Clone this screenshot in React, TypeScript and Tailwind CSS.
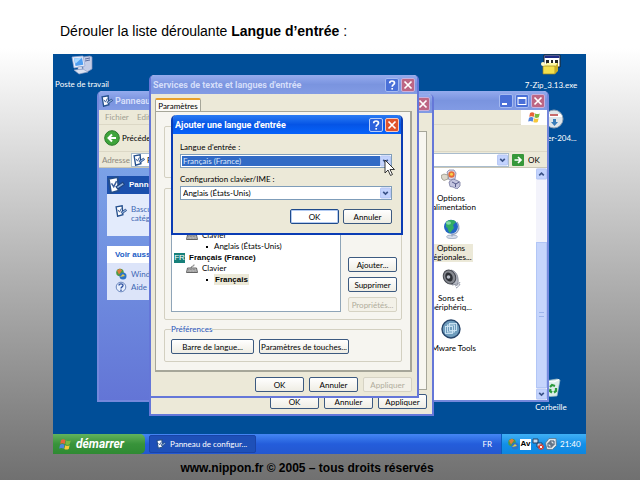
import React from "react";

type Kids = { children?: React.ReactNode };

const TITLE = "font-[Roboto,'Liberation_Sans',sans-serif] font-bold text-[9px] leading-[12px] whitespace-nowrap";
const BOLD = "font-['Liberation_Sans',Arial,sans-serif] text-[8px] font-bold";

function CaptionButton({ kind, active = false }: { kind: "help" | "close" | "min" | "max"; active?: boolean }) {
  const close = kind === "close";
  const tone = close
    ? active
      ? "bg-[#e0532c] border-[#f6c9bd]"
      : "bg-[#bd6684] border-[#c9b0dc]"
    : active
      ? "bg-[#2c62dc] border-[#b7cdf8]"
      : "bg-[#4a70d8] border-[#a5baf0]";
  return (
    <button type="button" aria-label={kind} className={`h-[14px] w-[14px] shrink-0 rounded-xs border ${tone}`}>
      <svg viewBox="0 0 12 12" className="h-full w-full" fill="none" stroke="#fff" strokeWidth="1.7">
        {kind === "close" && <path d="M2.5 2.5l7 7M9.500 2.5l-7 7" />}
        {kind === "help" && (
          <>
            <path d="M3.700 4.200C3.700 1.300 8.500 1.300 8.500 4c0 1.700-2.300 1.700-2.300 3.700" />
            <path d="M6.200 9v1.600" />
          </>
        )}
        {kind === "min" && <path d="M2 9h5" strokeWidth="2" />}
        {kind === "max" && (
          <>
            <rect x="2" y="2.500" width="8" height="7" strokeWidth="1" />
            <path d="M2 3h8" strokeWidth="2" />
          </>
        )}
      </svg>
    </button>
  );
}

function TitleBar({ text, icon, buttons, active = false }: { text: string; icon?: React.ReactNode; buttons: ("help" | "close" | "min" | "max")[]; active?: boolean }) {
  return (
    <header
      className={`flex h-[19px] shrink-0 items-center gap-[2px] rounded-t-[4px] pr-[2px] pl-[2px] ${
        active ? "bg-linear-to-b from-[#2a7bf3] via-[#0554e6] to-[#0763fa] text-white" : "bg-linear-to-b from-[#95abee] via-[#7a94df] to-[#829be4] text-[#d5defa]"
      }`}
    >
      {icon}
      <h2 className={`${TITLE} flex-1 overflow-hidden`}>{text}</h2>
      {buttons.map((b) => (
        <CaptionButton key={b} kind={b} active={active} />
      ))}
    </header>
  );
}

function XpButton({ children, wide = "w-[49px]", disabled = false, primary = false }: Kids & { wide?: string; disabled?: boolean; primary?: boolean }) {
  const tone = disabled
    ? "border-[#d6d3c4] bg-[#f3f1e8] text-[#b0ad9c]"
    : primary
      ? "border-[#1f4a8a] bg-white text-black shadow-[inset_0_0_0_1px_#b3cbf2]"
      : "border-[#3c5a80] bg-linear-to-b from-white to-[#efede4] text-black";
  return (
    <button type="button" disabled={disabled} className={`h-[15px] shrink-0 rounded-xs border text-[8px] leading-[12px] whitespace-nowrap ${wide} ${tone}`}>
      {children}
    </button>
  );
}

function Chevron({ up = false }: { up?: boolean }) {
  return (
    <svg viewBox="0 0 12 12" className="h-3 w-[11px]" fill="none">
      <rect x="0.500" y="0.500" width="11" height="11" rx="1" fill="#c3d3fd" stroke="#b1c4f4" />
      <path d={up ? "M3.500 7.500L6 5l2.500 2.500" : "M3.500 4.700L6 7.200l2.500-2.500"} stroke="#3a5388" strokeWidth="1.800" />
    </svg>
  );
}

function Combo({ id, label, value, selected = false }: { id: string; label: string; value: string; selected?: boolean }) {
  return (
    <div className="flex flex-col gap-[2px]">
      <label htmlFor={id} className="leading-[10px]">{label}</label>
      <div className="flex h-[14px] items-center border border-[#7f9db9] bg-white pl-px">
        <select id={id} className={`h-[10px] min-w-0 flex-1 appearance-none px-px leading-[10px] outline-none ${selected ? "bg-[#316ac5] text-[#dbe7fb]" : "bg-white text-black"}`}>
          <option>{value}</option>
        </select>
        <Chevron />
      </div>
    </div>
  );
}

function PanelIcon({ className = "h-3 w-3" }: { className?: string }) {
  return (
    <svg viewBox="0 0 16 16" className={`shrink-0 ${className}`}>
      <path d="M1.500 2.500l8-1.500 1 12-7 2z" fill="#fff" stroke="#244f8d" strokeWidth="1.800" />
      <path d="M4 6.500l2 3 2.500-5" fill="none" stroke="#3c5f9a" strokeWidth="1.300" />
      <path d="M8 9.500l6-4 1.500 2-6 4z" fill="#8fb0dc" stroke="#1d4380" strokeWidth="1" />
    </svg>
  );
}

function Flag({ className }: { className: string }) {
  return (
    <svg viewBox="0 0 16 16" className={`shrink-0 ${className}`}>
      <path d="M2.500 2.500C4.500 1.200 6 1.500 8 2.700L7 7.500C5.200 6.300 3.500 6.200 1.500 7.200z" fill="#e8643a" />
      <path d="M8.800 3c2 1 3.700 1 5.700 0l-1.200 4.800c-2 1-3.700 1-5.500 0z" fill="#7cba40" />
      <path d="M1.300 8.200c2-1 3.700-.9 5.500.2l-1.100 4.700c-1.800-1-3.500-1.200-5.500-.2z" fill="#5183dc" />
      <path d="M7.600 8.800c1.900 1 3.500 1 5.500.1L12 13.600c-2 1-3.700.9-5.500-.1z" fill="#f6c83b" />
    </svg>
  );
}

function Keyboard() {
  return (
    <svg viewBox="0 0 12 10" className="h-[10px] w-3 shrink-0">
      <path d="M5 4C5 1 9 3 8 .5" fill="none" stroke="#777" />
      <path d="M1.500 4h9l1 4.500H.5z" fill="#c9c9c9" stroke="#555" strokeWidth="0.900" />
      <path d="M2.300 5.600h7.500M1.800 7.100h8.500" stroke="#666" strokeWidth="0.800" strokeDasharray="1 .5" />
    </svg>
  );
}

function GlobeHand({ className = "h-3 w-3" }: { className?: string }) {
  return (
    <svg viewBox="0 0 12 12" className={`shrink-0 ${className}`}>
      <circle cx="5" cy="4.500" r="3.800" fill="#4d9a45" />
      <path d="M2 2.500l3-2 2 2-3 4z" fill="#dd7d3d" />
      <circle cx="8" cy="8" r="3.500" fill="#2d74c6" />
      <path d="M5 9l3-3 2 2" fill="#e5ca4b" />
    </svg>
  );
}

function HelpIcon() {
  return (
    <svg viewBox="0 0 12 12" className="h-3 w-3 shrink-0" fill="none">
      <circle cx="6" cy="6" r="4.800" fill="#e7effd" stroke="#6a86bd" />
      <path d="M4 4.500c0-2.300 4-2.300 4 0C8 6 6 5.800 6 7.500M6 8.500V10" stroke="#2c4fa0" strokeWidth="1.300" />
    </svg>
  );
}

function PowerIcon() {
  return (
    <svg viewBox="0 0 20 20" className="h-5 w-5">
      <path d="M6 3l2-2 5 0 2 3-1 6-6 1z" fill="#d9d8ea" stroke="#8583a6" strokeWidth="0.800" />
      <circle cx="10.500" cy="5.500" r="3.200" fill="#e76b3a" />
      <circle cx="10.500" cy="5.300" r="1.500" fill="#f7d24b" />
      <path d="M0 6.500l3-1.500 4 1v4l-4 1.500L1 10z" fill="#dcd8cc" stroke="#8a8778" strokeWidth="0.700" />
      <path d="M8 13l4-3 3 1 4 2v4l-3 3-4-2-3-.5z" fill="#c4c5df" stroke="#7678a0" strokeWidth="0.800" />
      <path d="M11 13l4 2 3-2M14.500 15v3" fill="none" stroke="#555a8b" />
    </svg>
  );
}

function GlobeIcon() {
  return (
    <svg viewBox="0 0 20 20" className="h-5 w-5">
      <ellipse cx="11" cy="17.800" rx="5.500" ry="1.800" fill="#d9dfec" stroke="#8d9bb5" strokeWidth="0.700" />
      <path d="M16 3c4 6 1 12-5 12.500v2" fill="none" stroke="#95a4bf" strokeWidth="1.300" />
      <circle cx="10" cy="7.800" r="7" fill="#2366c4" />
      <path d="M5 3c4-3 9-2 10 0l-3 3 1 3-4 5c-3-2-1-5-4-6z" fill="#32ad64" />
      <ellipse cx="7.500" cy="4" rx="2.500" ry="1.800" fill="#a4edc6" opacity=".7" />
    </svg>
  );
}

function SpeakerIcon() {
  return (
    <svg viewBox="0 0 20 20" className="h-5 w-5">
      <path d="M10 1c5 1 8 6 7 14l-6 1z" fill="#b5b9c4" stroke="#6f7380" strokeWidth="0.700" />
      <ellipse cx="8.500" cy="8" rx="6" ry="7.200" fill="#85888f" stroke="#42454d" transform="rotate(-25 8.500 8)" />
      <ellipse cx="8" cy="8" rx="3.500" ry="4.800" fill="#2c2f35" transform="rotate(-25 8 8)" />
      <circle cx="7.500" cy="8" r="1.800" fill="#b9bdc7" />
      <path d="M14 17c3-1 4-2 5-4M15 19c2-1 3-2 4-4" stroke="#8d93a5" fill="none" />
    </svg>
  );
}

function VmwareIcon() {
  return (
    <svg viewBox="0 0 20 20" className="h-5 w-5" fill="none">
      <circle cx="10" cy="10" r="9" fill="#6f9dbd" stroke="#27456b" strokeWidth="1.400" />
      <g stroke="#cfe6f5" strokeWidth="0.900">
        <rect x="4.500" y="7.500" width="7" height="7" />
        <rect x="8.500" y="4.500" width="7" height="7" />
        <rect x="6.500" y="6" width="7" height="7" />
      </g>
    </svg>
  );
}

function ComputerIcon() {
  return (
    <svg viewBox="0 0 24 20" className="h-5 w-6">
      <path d="M13 2l7-1 2 1v12l-5 3-4-2z" fill="#c5cde7" stroke="#8795bf" strokeWidth="0.700" />
      <path d="M15 4l5-1M15 6l5-1" stroke="#5d6c9d" />
      <path d="M2 2l11-1 2 10-11 2z" fill="#e7ecfa" stroke="#98a8d3" strokeWidth="0.700" />
      <path d="M4 3.500l8-.7 1.300 7L5.500 11z" fill="#4f9df0" />
      <path d="M4 3.500l8-.7-6.500 6z" fill="#a8d7ff" />
      <path d="M8 12l4-.5.500 3H8zM4 15l9-1 5 3-9 2z" fill="#dce2f2" stroke="#8f9dc4" strokeWidth="0.600" />
    </svg>
  );
}

function ZipIcon() {
  return (
    <svg viewBox="0 0 22 22" className="h-[22px] w-[22px]">
      <path d="M4 1h16v12H4z" fill="#fff" stroke="#222" />
      <path d="M4.500 1.500h15V4h-15z" fill="#1d2b86" />
      <path d="M6 6h3v4H6zM11 6h2v4h-2zM15 6h3v4h-3z" fill="#252525" />
      <path d="M3 12l4-3h11l-3 3z" fill="#fff7a0" />
      <path d="M3 12h12v8H3z" fill="#f3e04e" stroke="#9a8520" strokeWidth="0.700" />
      <path d="M15 12l3-3v8l-3 3z" fill="#c9ad25" />
      <circle cx="3" cy="10" r="2" fill="#fff8c4" />
    </svg>
  );
}

function DiscIcon() {
  return (
    <svg viewBox="0 0 20 20" className="h-5 w-5">
      <circle cx="10" cy="10" r="9" fill="#dfe5ea" stroke="#8da0b3" />
      <path d="M3 5h14l1 3H2z" fill="#fff" />
      <path d="M6 6h8" stroke="#b63939" strokeWidth="1.500" />
      <path d="M9 10h3v3h2l-3.500 4L7 13h2z" fill="#397cb9" />
    </svg>
  );
}

function BinIcon() {
  return (
    <svg viewBox="0 0 20 20" className="h-5 w-5">
      <path d="M4 3l12-2 3 1-3 16-7 .5-4-2z" fill="#dcece9" stroke="#9ebcc4" strokeWidth="0.700" />
      <path d="M4 3l9 1 5-2.500" fill="none" stroke="#fff" strokeWidth="1.200" />
      <g fill="none" stroke="#2c9a3b" strokeWidth="2.200">
        <path d="M9 9l2-2 3 1M15 10v3l-2 1.500M11 14.500L9 13l.5-2" />
      </g>
    </svg>
  );
}

function Shortcut({ place, icon, label, labelPad = "" }: { place: string; icon: React.ReactNode; label: string; labelPad?: string }) {
  return (
    <div className={`absolute flex w-16 flex-col items-center gap-1 text-[8px] leading-[10px] whitespace-nowrap text-white ${place}`}>
      {icon}
      <span className={labelPad}>{label}</span>
    </div>
  );
}

function PanelItem({ icon, label, selected = false }: { icon: React.ReactNode; label: React.ReactNode; selected?: boolean }) {
  return (
    <li className="flex h-[50px] flex-col items-center gap-[5px] pt-px">
      {icon}
      <span className={`px-px text-center leading-[9px] whitespace-nowrap ${selected ? "bg-[#ece9d8]" : ""}`}>{label}</span>
    </li>
  );
}

function Explorer() {
  return (
    <section className="absolute top-[37px] left-11 flex h-[311px] w-[452px] flex-col rounded-t-[5px] border-2 border-t-0 border-[#7488dc] bg-[#ece9d8] text-[8px]">
      <TitleBar text="Panneau" icon={<PanelIcon />} buttons={["min", "max", "close"]} />
      <nav className="flex h-[15px] items-center border-b border-[#dcd8c6] text-[#a09e92]">
        <span className="w-8 pl-[6px]">Fichier</span>
        <span className="flex-1 pl-[6px]">Edit</span>
        <span className="flex h-[15px] w-[26px] items-center justify-center bg-white">
          <Flag className="h-[13px] w-[13px]" />
        </span>
      </nav>
      <div className="flex h-[27px] items-center gap-[2px] border-b border-[#dcd8c6] pl-[5px]">
        <svg viewBox="0 0 16 16" className="h-4 w-4">
          <circle cx="8" cy="8" r="7.300" fill="#3fa43b" stroke="#2a7a2b" />
          <path d="M12 8H5M8 4.500L4.500 8 8 11.500" fill="none" stroke="#fff" strokeWidth="2" />
        </svg>
        <span>Précéde</span>
      </div>
      <div className="flex h-4 items-center border-b border-[#c9c6b6]">
        <span className="w-8 pl-[3px] text-[#8c8a80]">Adresse</span>
        <div className="flex h-[14px] flex-1 items-center gap-[2px] border border-[#a9bccd] bg-white pl-px">
          <PanelIcon />
          <span className="flex-1">P</span>
          <Chevron />
        </div>
        <button type="button" className="flex w-[38px] items-center gap-1 pl-[3px]">
          <svg viewBox="0 0 12 12" className="h-3 w-3">
            <rect width="12" height="12" rx="1" fill="#36983a" />
            <path d="M2.500 6h6M6 3l3 3-3 3" fill="none" stroke="#fff" strokeWidth="1.700" />
          </svg>
          OK
        </button>
      </div>
      <div className="flex min-h-0 flex-1">
        <aside className="flex w-[150px] flex-col gap-[10px] bg-linear-to-b from-[#7ba2e7] to-[#6375d6] pt-2 pr-2 pl-2 text-[#4067b3]">
          <div>
            <h3 className={`flex h-[18px] items-center gap-1 bg-[#1b50ad] text-white ${BOLD}`}>
              <PanelIcon className="h-[18px] w-[18px]" />
              Pann
            </h3>
            <p className="flex h-[42px] gap-1 bg-[#e3ebfc] pt-[11px] pl-2 leading-[9px]">
              <PanelIcon />
              <span>Bascu<br />catég</span>
            </p>
          </div>
          <div>
            <h3 className={`flex h-[17px] items-center bg-white pl-2 text-[#215dc6] ${BOLD}`}>Voir auss</h3>
            <ul className="flex h-[37px] flex-col gap-px bg-[#dce4f9] pt-[5px] pl-2 leading-[12px]">
              <li className="flex items-center gap-1"><GlobeHand />Windo</li>
              <li className="flex items-center gap-1"><HelpIcon />Aide e</li>
            </ul>
          </div>
        </aside>
        <div className="flex flex-1 justify-end overflow-hidden bg-white pr-[55px]">
          <ul className="w-[60px]">
            <PanelItem icon={<PowerIcon />} label={<>Options<br />d'alimentation</>} />
            <PanelItem icon={<GlobeIcon />} label={<>Options<br />régionales...</>} selected />
            <PanelItem icon={<SpeakerIcon />} label={<>Sons et<br />périphériq...</>} />
            <PanelItem icon={<VmwareIcon />} label="VMware Tools" />
          </ul>
        </div>
        <div className="flex w-[11px] flex-col bg-[#f3f3fb]">
          <Chevron up />
          <div className="flex-[3]" />
          <div className="flex flex-[7] items-center justify-center border border-[#b2c6f6] bg-[#c6d5fc]">
            <i className="h-[5px] w-[5px] border-y border-[#9db5ec]" />
          </div>
          <Chevron />
        </div>
      </div>
    </section>
  );
}

function RegionalWindow() {
  return (
    <section className="absolute top-[40px] left-24 flex h-[322px] w-[285px] flex-col rounded-t-[5px] border-2 border-t-0 border-[#6577d8] bg-[#ece9d8] text-[8px]">
      <TitleBar text="" buttons={["close"]} />
      <div className="flex flex-1 flex-col gap-1 px-[5px] pt-[18px] pb-[5px]">
        <div className="flex-1 border border-[#a6a699] bg-[#f7f6f0] p-2">
          <div className="h-16 rounded-xs border border-[#d8d5c7]" />
          <div className="mt-[10px] h-20 rounded-xs border border-[#d8d5c7]" />
        </div>
        <div className="flex justify-end gap-[5px]">
          <XpButton>OK</XpButton>
          <XpButton>Annuler</XpButton>
          <XpButton>Appliquer</XpButton>
        </div>
      </div>
    </section>
  );
}

function ServicesWindow() {
  return (
    <section className="absolute top-[21px] left-24 flex h-[323px] w-[270px] flex-col rounded-t-[5px] border-2 border-t-0 border-[#6577d8] bg-[#ece9d8] text-[8px]">
      <TitleBar text="Services de texte et langues d'entrée" buttons={["help", "close"]} />
      <div className="flex flex-1 flex-col pt-1 pr-[5px] pb-[6px] pl-1">
        <div role="tablist" className="flex">
          <button role="tab" type="button" className="-mb-px h-[14px] w-[46px] rounded-t-xs border border-t-2 border-b-0 border-[#a6a699] border-t-[#e8a02c] bg-[#fbfaf6] leading-[10px]">Paramètres</button>
        </div>
        <div className="flex flex-1 flex-col border border-r-2 border-b-2 border-[#a6a699] bg-[#f6f5f0] px-2 pt-[14px] pb-2">
          <div className="h-[52px] rounded-xs border border-[#d3d0c1]" />
          <div className="mt-[10px] flex h-[132px] gap-[7px] rounded-xs border border-[#d3d0c1] py-[7px] pr-1 pl-[6px]">
            <ul className="flex flex-1 flex-col border border-[#8fa5b8] bg-white pt-[33px] leading-[11px]">
              <li className="flex items-center gap-1 pl-[14px]"><Keyboard />Clavier</li>
              <li className="flex items-center gap-[6px] pl-[34px]"><i className="h-[2px] w-[2px] bg-black" />Anglais (États-Unis)</li>
              <li className={`flex items-center gap-1 pl-[2px] ${BOLD}`}>
                <span className="h-[10px] w-[11px] bg-[#17807a] text-center font-normal leading-[10px] text-white">FR</span>
                Français (France)
              </li>
              <li className="flex items-center gap-1 pl-[14px]"><Keyboard />Clavier</li>
              <li className={`flex items-center gap-[6px] pl-[34px] ${BOLD}`}><i className="h-[2px] w-[2px] bg-black" /><span className="bg-[#ece9d8] px-px">Français</span></li>
            </ul>
            <div className="flex flex-col justify-end gap-[5px]">
              <XpButton>Ajouter...</XpButton>
              <XpButton>Supprimer</XpButton>
              <XpButton disabled>Propriétés...</XpButton>
            </div>
          </div>
          <fieldset className="mt-1 rounded-xs border border-[#d3d0c1] px-[6px] pb-[7px]">
            <legend className="leading-[10px] text-[#2a55b8]">Préférences</legend>
            <div className="flex gap-[5px] pt-[5px]">
              <XpButton wide="w-[83px]">Barre de langue...</XpButton>
              <XpButton wide="w-[90px]">Paramètres de touches...</XpButton>
            </div>
          </fieldset>
        </div>
        <div className="flex justify-end gap-[5px] pt-[5px]">
          <XpButton>OK</XpButton>
          <XpButton>Annuler</XpButton>
          <XpButton disabled>Appliquer</XpButton>
        </div>
      </div>
    </section>
  );
}

function AddLanguageDialog() {
  return (
    <section role="dialog" className="absolute top-[61px] left-[118px] flex h-[120px] w-[232px] flex-col rounded-t-[5px] border-2 border-t-0 border-[#0a3cb4] bg-[#ece9d8] text-[8px]">
      <TitleBar text="Ajouter une langue d'entrée" buttons={["help", "close"]} active />
      <form className="flex flex-1 flex-col gap-[6px] pt-2 pr-[9px] pl-[7px]" onSubmit={(e) => e.preventDefault()}>
        <Combo id="lang" label="Langue d'entrée :" value="Français (France)" selected />
        <Combo id="layout" label="Configuration clavier/IME :" value="Anglais (États-Unis)" />
        <div className="flex justify-end gap-1 pt-[3px]">
          <XpButton primary>OK</XpButton>
          <XpButton>Annuler</XpButton>
        </div>
      </form>
    </section>
  );
}

function Taskbar() {
  return (
    <footer className="absolute inset-x-0 bottom-0 flex h-5 items-stretch bg-linear-to-b from-[#4486f4] via-[#245ddb] to-[#2458d0] text-[8px] text-white">
      <button type="button" className="flex w-[92px] items-center gap-1 rounded-r-[5px] bg-linear-to-b from-[#62b35c] via-[#38933a] to-[#2f8a33] pl-[6px] font-[Roboto,sans-serif] text-[12px] leading-[16px] font-bold italic">
        <Flag className="h-[13px] w-[13px]" />
        démarrer
      </button>
      <button type="button" className="my-px ml-1 flex w-[107px] items-center gap-1 rounded-xs border border-[#1a44a8] bg-[#1e50b8] pl-[6px] whitespace-nowrap">
        <PanelIcon className="h-[10px] w-[10px]" />
        Panneau de configur...
      </button>
      <span className="ml-auto flex items-center pr-[9px]">FR</span>
      <div className="flex w-[85px] items-center gap-px border-l border-[#0d5bbd] bg-linear-to-b from-[#3fb0f5] via-[#1290e8] to-[#0f86df] pl-[5px]">
        <GlobeHand />
        <span className={`h-[11px] w-[11px] bg-white text-center leading-[10px] text-black ${BOLD}`}>Av</span>
        <svg viewBox="0 0 12 12" className="h-3 w-3">
          <path d="M1 1h5v4H1zM5 5h5v4H5z" fill="#c9dcf0" stroke="#25456b" />
          <circle cx="9" cy="9" r="2.800" fill="#d93a2b" />
          <path d="M7.800 7.800l2.400 2.400M10.200 7.800L7.800 10.200" stroke="#fff" />
        </svg>
        <svg viewBox="0 0 12 12" className="h-3 w-3" fill="none">
          <path d="M4 .5h7l.5 7-4 4H2L.5 5z" fill="#dce4e9" stroke="#546a7c" strokeWidth="0.700" />
          <path d="M3 5h4v4H3zM5 3h4v4H5z" stroke="#3c5168" />
        </svg>
        <span className="pl-[2px]">21:40</span>
      </div>
    </footer>
  );
}

export default function App() {
  return (
    <main className="flex min-h-screen flex-col bg-linear-to-b from-white from-10% to-[#707070] font-['Liberation_Sans',Arial,sans-serif] text-black">
      <h1 className="px-[60px] pt-[22px] pb-[14px] text-[14px] leading-[18px]">
        Dérouler la liste déroulante <b>Langue d’entrée</b> :
      </h1>
      <div className="relative mr-[54px] ml-[53px] min-h-[400px] flex-1 overflow-hidden bg-[#004e98] font-[Lato,Roboto,sans-serif]">
        <Shortcut place="top-px -left-[3px]" icon={<ComputerIcon />} label="Poste de travail" />
        <Shortcut place="top-0 right-[3px]" icon={<ZipIcon />} label="7-Zip_3.13.exe" />
        <Shortcut place="top-[55px] right-0" icon={<DiscIcon />} label="er-204..." labelPad="pl-4" />
        <Shortcut place="top-[324px] right-[3px]" icon={<BinIcon />} label="Corbeille" />
        <Explorer />
        <RegionalWindow />
        <ServicesWindow />
        <AddLanguageDialog />
        <svg viewBox="0 0 12 18" className="absolute top-[105px] left-[331px] h-[18px] w-3">
          <path d="M1 1v13l3-3 2.500 5.500 2-1L6 10.500h4.500z" fill="#fff" stroke="#222" strokeWidth="0.900" />
        </svg>
        <Taskbar />
      </div>
      <p className="pt-[6px] pr-[26px] pb-[5px] text-center text-[12px] leading-[16px] font-bold">www.nippon.fr © 2005 – tous droits réservés</p>
    </main>
  );
}
